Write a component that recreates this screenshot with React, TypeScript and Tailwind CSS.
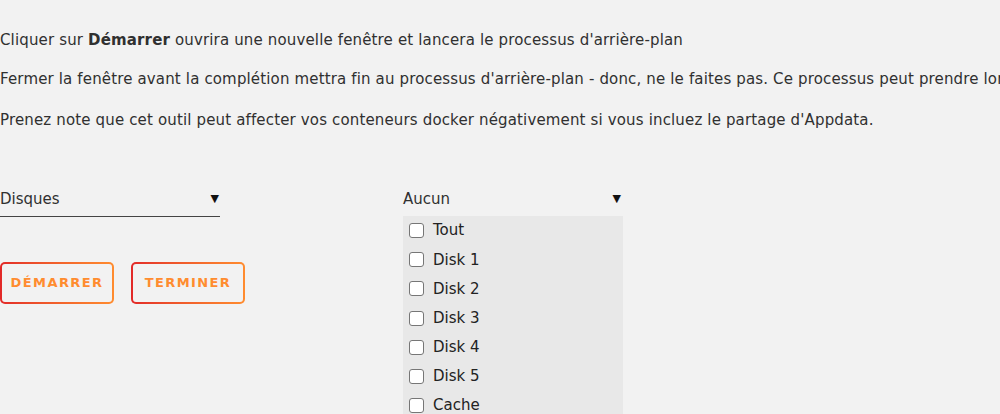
import React from "react";

const disks = ["Tout", "Disk 1", "Disk 2", "Disk 3", "Disk 4", "Disk 5", "Cache"];

function GradButton({ label }: { label: string }) {
    return (
        <div className="rounded-[5px] bg-gradient-to-r from-[#e22828] to-[#ff8c2f] p-[2px]">
            <div className="flex h-[38px] w-[110px] items-center justify-center rounded-[3px] bg-[#f2f2f2]">
                <span className="text-[13px] font-bold tracking-[1.4px] text-[#ff8c2f]">{label}</span>
            </div>
        </div>
    );
}

export default function App() {
    return (
        <div
            className="h-[414px] w-[1000px] overflow-hidden bg-[#f2f2f2] text-[#303030]"
            style={{ fontFamily: '"DejaVu Sans", "Noto Sans", sans-serif' }}
        >
            <div className="whitespace-nowrap pt-[29px] text-[15px] leading-[22px] tracking-[0.15px]">
                <p>
                    Cliquer sur <b>Démarrer</b> ouvrira une nouvelle fenêtre et lancera le processus d'arrière-plan
                </p>
                <p className="mt-[17px]">
                    Fermer la fenêtre avant la complétion mettra fin au processus d'arrière-plan - donc, ne le faites pas. Ce processus peut prendre longtemps.
                </p>
                <p className="mt-[19px]">
                    Prenez note que cet outil peut affecter vos conteneurs docker négativement si vous incluez le partage d'Appdata.
                </p>
            </div>

            <div className="mt-[51px] flex">
                <div className="w-[403px] shrink-0">
                    <div className="flex h-[35px] w-[220px] items-center justify-between border-b border-[#444] pr-[1px]">
                        <span className="text-[15px]">Disques</span>
                        <span className="text-[11px] text-[#111]">▼</span>
                    </div>
                    <div className="mt-[45px] flex gap-[17px]">
                        <GradButton label="DÉMARRER" />
                        <GradButton label="TERMINER" />
                    </div>
                </div>

                <div className="w-[220px]">
                    <div className="flex h-[34px] items-center justify-between pr-[2px]">
                        <span className="text-[15px]">Aucun</span>
                        <span className="text-[11px] text-[#111]">▼</span>
                    </div>
                    <div className="bg-[#e8e8e8] pl-[6px]">
                        {disks.map((d) => (
                            <div key={d} className="flex h-[29.2px] items-center gap-[9px]">
                                <span className="h-[15px] w-[15px] rounded-[3px] border border-[#767676] bg-white" />
                                <span className="text-[15px] text-[#222]">{d}</span>
                            </div>
                        ))}
                    </div>
                </div>
            </div>
        </div>
    );
}
